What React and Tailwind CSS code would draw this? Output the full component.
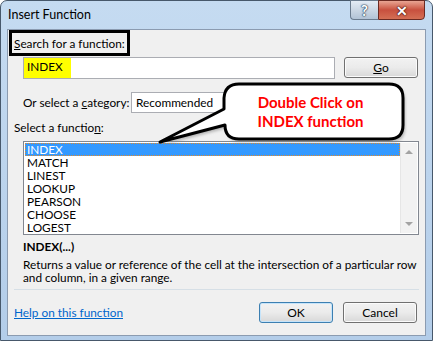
import React from 'react';

const functions = ['INDEX', 'MATCH', 'LINEST', 'LOOKUP', 'PEARSON', 'CHOOSE', 'LOGEST'];

const Btn = ({ children, primary, className = '' }) => (
    <button
        className={`h-[21px] w-[74px] rounded-[3px] border text-[12px] text-black bg-gradient-to-b from-[#f2f2f2] via-[#ebebeb] to-[#d8d8d8] ${primary ? 'border-[#3c7fb1] shadow-[inset_0_0_0_1px_#c6e4fa]' : 'border-[#707070] shadow-[inset_0_0_0_1px_#fbfbfb]'} ${className}`}
    >
        {children}
    </button>
);

export default function App() {
    return (
        <div className="relative w-[433px] h-[341px] overflow-hidden bg-white font-['Lato',sans-serif]">
            <div className="w-full h-full flex flex-col rounded-t-[7px] border border-[#47586b] bg-gradient-to-b from-[#c5dbf1] via-[#bcd4ed] to-[#b3cde9]">
                {/* title bar */}
                <div className="h-[28px] flex items-start justify-between pr-[7px] shrink-0">
                    <span className="pl-[7px] pt-[6px] text-[12.5px] text-black leading-[16px]">Insert Function</span>
                    <div className="flex -mt-[1px]">
                        <div className="w-[28px] h-[20px] rounded-bl-[4px] border border-[#6a7b8e] border-r-0 bg-gradient-to-b from-[#e4ecf5] via-[#cbd7e4] to-[#b2c3d6] flex items-center justify-center text-white font-bold text-[15px] [text-shadow:0_0_1px_#243a52,0_0_1px_#243a52,0_0_2px_#243a52]">?</div>
                        <div className="w-[47px] h-[20px] rounded-br-[4px] border border-[#6b2a22] bg-gradient-to-b from-[#e8a493] via-[#c8503e] to-[#d46f55] flex items-center justify-center text-white font-bold text-[14px] [text-shadow:0_0_1px_#4a120c,0_0_1px_#4a120c,0_0_2px_#4a120c]">✕</div>
                    </div>
                </div>

                {/* client area */}
                <div className="flex-1 mx-[6px] mb-[4px] border border-[#8b9bb0] bg-[#f0f0f0] text-[11.8px] text-black leading-[16px] whitespace-nowrap">
                    <div className="ml-[1px] w-[121px] h-[26px] border-[3px] border-black flex items-center pl-[2px] pt-[1px]">
                        <span><span className="underline">S</span>earch for a function:</span>
                    </div>

                    <div className="flex items-start mt-[1px] ml-[15px]">
                        <div className="w-[312px] h-[22px] border border-[#abadb3] bg-white flex">
                            <span className="w-[47px] h-full bg-[#ffff00] pl-[3px] pt-[1px]">INDEX</span>
                        </div>
                        <Btn className="ml-[9px]"><span className="underline">G</span>o</Btn>
                    </div>

                    <div className="flex items-center mt-[13px] ml-[15px]">
                        <span className="w-[108px]">Or select a <span className="underline">c</span>ategory:</span>
                        <div className="w-[205px] h-[21px] border border-[#abadb3] bg-white pl-[4px] flex items-center">Recommended</div>
                    </div>

                    <div className="ml-[6px] mt-[7px]">Select a functio<span className="underline">n</span>:</div>

                    <div className="ml-[15px] mt-[5px] w-[396px] h-[94px] border border-[#828790] bg-white flex p-[1px]">
                        <div className="flex-1 flex flex-col">
                            {functions.map((f, i) => (
                                <div
                                    key={f}
                                    className={`h-[13px] leading-[13px] pl-[2px] ${i === 0 ? 'bg-[#3399ff] text-white outline-1 outline-dotted outline-[#e08a2c] -outline-offset-1' : ''}`}
                                >
                                    {f}
                                </div>
                            ))}
                        </div>
                        <div className="w-[17px] bg-[#f2f2f2] border-l border-[#e6e6e6] flex flex-col items-center justify-between py-[7px]">
                            <svg width="8" height="4" viewBox="0 0 8 4"><path d="M0 4 L4 0 L8 4 Z" fill="#a3a3a3" /></svg>
                            <svg width="8" height="4" viewBox="0 0 8 4"><path d="M0 0 L4 4 L8 0 Z" fill="#a3a3a3" /></svg>
                        </div>
                    </div>

                    <div className="ml-[15px] mt-[4px] font-bold">INDEX(...)</div>
                    <div className="ml-[15px] mt-[3px] leading-[13px] whitespace-normal">
                        Returns a value or reference of the cell at the intersection of a particular row<br />and column, in a given range.
                    </div>

                    <div className="ml-[6px] mr-[6px] mt-[5px] h-px bg-[#d6dfe6]" />

                    <div className="flex items-center mt-[12px] ml-[6px] mr-[8px]">
                        <span className="flex-1 text-[#0066cc] underline">Help on this function</span>
                        <Btn primary>OK</Btn>
                        <Btn className="ml-[10px]">Cancel</Btn>
                    </div>
                </div>
            </div>

            {/* callout annotation */}
            <svg className="absolute left-0 top-0 pointer-events-none" width="433" height="341" viewBox="0 0 433 341">
                <defs>
                    <filter id="sh" x="-10%" y="-10%" width="130%" height="140%">
                        <feGaussianBlur stdDeviation="1.5" />
                    </filter>
                </defs>
                <path
                    d="M239 84 H389 Q403 84 403 98 V125 Q403 139 389 139 H239 Q225 139 225 125 L160 142 L224 109 V98 Q225 84 239 84 Z"
                    fill="#808080"
                    opacity="0.55"
                    transform="translate(2 3)"
                    filter="url(#sh)"
                />
                <path
                    d="M239 84 H389 Q403 84 403 98 V125 Q403 139 389 139 H239 Q225 139 225 125 L160 142 L224 109 V98 Q225 84 239 84 Z"
                    fill="#ffffff"
                    stroke="#000000"
                    strokeWidth="3"
                    strokeLinejoin="round"
                />
            </svg>
            <div className="absolute left-[222px] top-[93px] w-[177px] flex flex-col items-center text-[#ff0000] font-bold text-[15px] leading-[19px] font-['Lato',sans-serif]">
                <span>Double Click on</span>
                <span>INDEX function</span>
            </div>
        </div>
    );
}
